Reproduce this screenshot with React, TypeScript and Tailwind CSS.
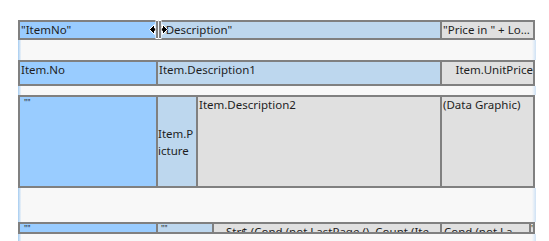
import React from 'react';

function Band({ h }: { h: string }) {
  return (
    <div className={`flex w-[518px] bg-[#f8f8f8] ${h}`}>
      <div className="w-[3px] bg-linear-to-r from-[#a3cbf0] to-[#eef3f8]" />
      <div className="flex-1" />
      <div className="w-[4px] bg-linear-to-r from-[#f8f8f8] to-[#cfe2f5]" />
    </div>
  );
}

function ResizeCursor() {
  return (
    <svg className="absolute left-[149px] top-[20px]" width="19" height="19" viewBox="0 0 19 19">
      <g stroke="#fff" strokeWidth="1" fill="#000">
        <path d="M0.5 9.5 L5.5 4.5 L5.5 8 L7 8 L7 11 L5.5 11 L5.5 14.5 Z" />
        <path d="M18.5 9.5 L13.5 4.5 L13.5 8 L12 8 L12 11 L13.5 11 L13.5 14.5 Z" />
        <rect x="7" y="0.5" width="2" height="18" />
        <rect x="10" y="0.5" width="2" height="18" />
      </g>
    </svg>
  );
}

export default function App() {
  const font = { fontFamily: '"Segoe UI", "Noto Sans", sans-serif' };
  return (
    <div
      className="relative w-[549px] h-[241px] overflow-hidden bg-white pt-[20px] pl-[18px] text-[11.5px] leading-[15px] text-[#1e1e1e]"
      style={font}
    >
      <div className="flex flex-col">
        {/* header row */}
        <div className="flex w-[517px] h-[20px] border-2 border-[#808080]">
          <div className="w-[136px] shrink-0 bg-[#99ccff] pl-px whitespace-nowrap overflow-hidden">"ItemNo"</div>
          <div className="w-[284px] shrink-0 bg-[#bdd7ee] border-l-2 border-[#808080] pl-[3px] whitespace-nowrap overflow-hidden">"Description"</div>
          <div className="w-[93px] shrink-0 bg-[#e0e0e0] border-l-2 border-[#808080] pl-px whitespace-nowrap overflow-hidden">"Price in " + Lo...</div>
        </div>
        <Band h="h-[20px]" />

        {/* detail row 1 */}
        <div className="flex w-[517px] h-[26px] border-2 border-[#808080]">
          <div className="w-[136px] shrink-0 bg-[#99ccff] pl-px whitespace-nowrap overflow-hidden">Item.No</div>
          <div className="w-[284px] shrink-0 bg-[#bdd7ee] border-l-2 border-[#808080] pl-px whitespace-nowrap overflow-hidden">Item.Description1</div>
          <div className="w-[93px] shrink-0 bg-[#e0e0e0] border-l-2 border-[#808080] text-right whitespace-nowrap overflow-hidden">Item.UnitPrice</div>
        </div>
        <Band h="h-[9px]" />

        {/* detail row 2 */}
        <div className="flex w-[517px] h-[93px] border-2 border-[#808080]">
          <div className="w-[136px] shrink-0 bg-[#99ccff] pl-[4px] text-[8px] leading-[12px]">""</div>
          <div className="w-[40px] shrink-0 bg-[#bdd7ee] border-l-2 border-[#808080] flex items-center leading-[17px] break-all">Item.Picture</div>
          <div className="w-[244px] shrink-0 bg-[#e0e0e0] border-l-2 border-[#808080] pl-px whitespace-nowrap overflow-hidden">Item.Description2</div>
          <div className="w-[93px] shrink-0 bg-[#e0e0e0] border-l-2 border-[#808080] pl-px whitespace-nowrap overflow-hidden">(Data Graphic)</div>
        </div>
        <Band h="h-[34px]" />

        {/* footer row */}
        <div className="flex w-[517px] h-[12px] border-2 border-[#808080]">
          <div className="w-[136px] shrink-0 bg-[#99ccff] pl-[4px] text-[8px] leading-[9px] overflow-hidden">""</div>
          <div className="w-[56px] shrink-0 bg-[#bdd7ee] border-l-2 border-[#808080] pl-[3px] text-[8px] leading-[9px] overflow-hidden">""</div>
          <div className="w-[228px] shrink-0 bg-[#e0e0e0] border-l-2 border-[#808080] pl-[12px] whitespace-nowrap overflow-hidden">Str$ (Cond (not LastPage (), Count (Ite</div>
          <div className="w-[89px] shrink-0 bg-[#e0e0e0] border-l-2 border-[#808080] pl-[2px] whitespace-nowrap overflow-hidden">Cond (not La</div>
          <div className="w-[4px] shrink-0 bg-[#e0e0e0] border-l-2 border-[#808080] text-[8px] leading-[9px] whitespace-nowrap overflow-hidden">"</div>
        </div>
        <Band h="h-[10px]" />
      </div>
      <ResizeCursor />
    </div>
  );
}
